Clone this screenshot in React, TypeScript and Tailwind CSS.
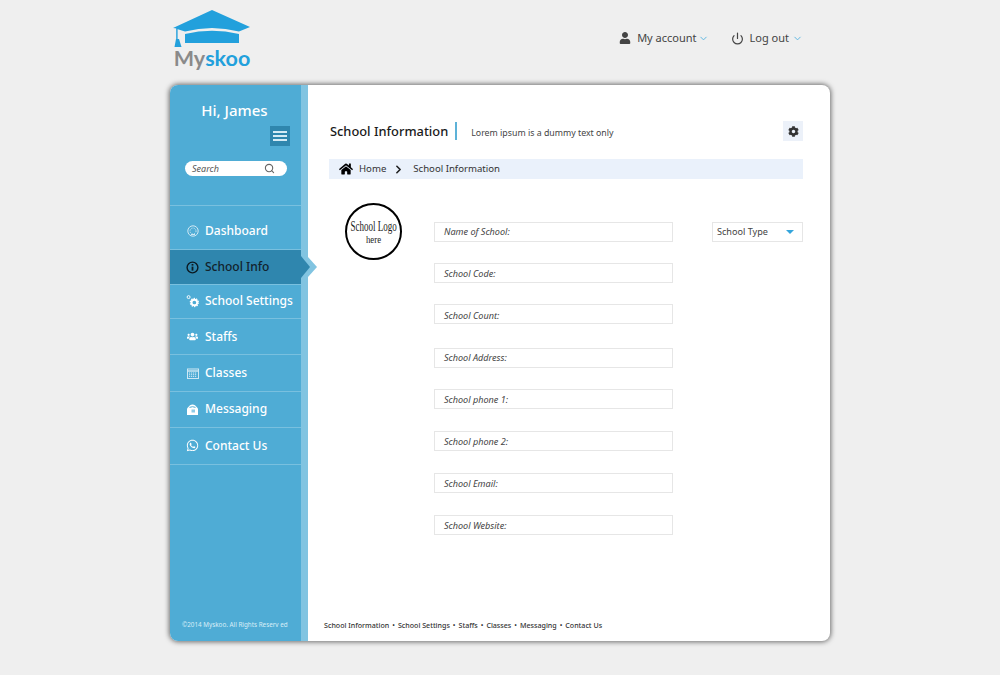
import React from 'react';
import { ChevronDown, ChevronRight, Power, Search } from 'lucide-react';
import { FaUser, FaHome, FaCog, FaUsers, FaWhatsapp } from 'react-icons/fa';

const font = "font-['Noto_Sans','Open_Sans',sans-serif]";

const GaugeIcon = () => (
  <svg width="12" height="12" viewBox="0 0 12 12" fill="none" stroke="#cfe8f4">
    <circle cx="6" cy="6" r="5.2" />
    <circle cx="6" cy="6" r="3" strokeDasharray="1.2 1.2" />
    <path d="M4 9.5h4" />
  </svg>
);

const InfoIcon = () => (
  <svg width="13" height="13" viewBox="0 0 13 13" fill="none" stroke="#0c1a22">
    <circle cx="6.5" cy="6.5" r="5.4" strokeWidth="1.4" />
    <path d="M6.5 5.6v4" strokeWidth="1.8" />
    <path d="M6.5 3v1.6" strokeWidth="1.8" />
  </svg>
);

const GearsIcon = () => (
  <svg width="14" height="14" viewBox="0 0 14 14" fill="none" stroke="#ffffff">
    <circle cx="2.8" cy="2.8" r="1.6" strokeWidth="1" />
    <circle cx="9" cy="8.6" r="3" strokeWidth="2" />
    <circle cx="9" cy="8.6" r="4.3" strokeWidth="1.4" strokeDasharray="1.5 1.2" />
  </svg>
);

const CalendarIcon = () => (
  <svg width="12" height="11" viewBox="0 0 12 11" fill="none" stroke="#cfe8f4">
    <rect x="0.5" y="1" width="11" height="9.5" />
    <path d="M0.5 3h11" strokeWidth="1.4" />
    <path d="M2 5h8M2 6.7h8M2 8.4h8" strokeDasharray="1.2 0.8" />
  </svg>
);

const MessageIcon = () => (
  <svg width="11" height="11" viewBox="0 0 11 11">
    <path d="M0 4.5 L3 1.2 Q5.5 -0.3 8 1.2 L11 4.5 V11 H0 Z" fill="#ffffff" />
    <path d="M2.5 3.4 Q5.5 2 8.5 3.4" fill="none" stroke="#4facd5" />
    <rect x="4.5" y="5.5" width="3.5" height="3" fill="#8ecbe6" />
  </svg>
);

const navItems = [
  { label: 'Dashboard', icon: <GaugeIcon />, cls: 'h-[44px] pt-[7px]' },
  { label: 'School Info', icon: <InfoIcon />, cls: 'h-[35px]', active: true },
  { label: 'School Settings', icon: <GearsIcon />, cls: 'h-[34px] pb-[1px]' },
  { label: 'Staffs', icon: <FaUsers size={11} />, cls: 'h-[36px]' },
  { label: 'Classes', icon: <CalendarIcon />, cls: 'h-[37px]' },
  { label: 'Messaging', icon: <MessageIcon />, cls: 'h-[36px] pb-[1px]' },
  { label: 'Contact Us', icon: <FaWhatsapp size={13} />, cls: 'h-[37px] pb-[1px]' },
];

const fields = [
  { label: 'Name of School:', cls: 'mt-0' },
  { label: 'School Code:', cls: 'mt-[21px] pt-[2px]' },
  { label: 'School Count:', cls: 'mt-[21px] pt-[3px]' },
  { label: 'School Address:', cls: 'mt-[24px]' },
  { label: 'School phone 1:', cls: 'mt-[21px] pt-[2px]' },
  { label: 'School phone 2:', cls: 'mt-[22px] pt-[2px]' },
  { label: 'School Email:', cls: 'mt-[22px] pt-[2px]' },
  { label: 'School Website:', cls: 'mt-[22px] pt-[2px]' },
];

const footerLinks = ['School Information', 'School Settings', 'Staffs', 'Classes', 'Messaging', 'Contact Us'];

function Logo() {
  return (
    <div className="flex w-[78px] flex-col items-center">
      <svg width="78" height="38" viewBox="0 0 78 38">
        <path d="M39 0 L77 17 L66 21.5 Q39 14.5 12 21.5 L4 19 L4 18.5 L0 18 Z" fill="#22a0dc" />
        <path d="M12 24 Q39 17.5 66 24 V33 H12 Z" fill="#22a0dc" />
        <rect x="3.2" y="18" width="1.4" height="12" fill="#22a0dc" />
        <path d="M3 29 H6 L8.5 37 H1.5 Z" fill="#22a0dc" />
      </svg>
      <div className="flex h-[22px] items-center font-['Lato',sans-serif] text-[21.5px] leading-none font-bold">
        <span className="text-[#8a8a8a]">My</span>
        <span className="text-[#22a0dc]">skoo</span>
      </div>
    </div>
  );
}

export default function App() {
  return (
    <div className={`${font} flex h-[675px] w-[1000px] flex-col items-center overflow-hidden bg-[#efefef]`}>
      {/* top bar */}
      <header className="flex h-[85px] w-[660px] pt-[10px] pr-[27px] pl-[3px]">
        <Logo />
        <div className="ml-auto flex h-[56px] items-center text-[11px] text-[#444444]">
          <FaUser size={12} className="text-[#444444]" />
          <span className="ml-[6px]">My account</span>
          <ChevronDown size={11} strokeWidth={2} className="ml-[1px] text-[#55b4e0]" />
          <Power size={13} strokeWidth={2.2} className="ml-[22px] text-[#444444]" />
          <span className="ml-[6px]">Log out</span>
          <ChevronDown size={11} strokeWidth={2} className="ml-[3px] text-[#55b4e0]" />
        </div>
      </header>

      {/* card */}
      <div className="flex h-[556px] w-[660px] rounded-[8px] bg-white shadow-[0_0_5px_1px_rgba(0,0,0,0.55)]">
        <aside className="flex w-[131px] shrink-0 flex-col rounded-l-[8px] bg-[#4facd5] text-white">
          <div className="pt-[14px] pr-[2px] text-center text-[15px] leading-[22px] font-medium">Hi, James</div>
          <div className="mt-[5px] flex justify-end pr-[11px]">
            <div className="flex h-[20px] w-[20px] flex-col items-center justify-center gap-[2px] bg-[#2f86ae]">
              <span className="h-[2px] w-[14px] bg-[#d5ebf5]" />
              <span className="h-[2px] w-[14px] bg-[#d5ebf5]" />
              <span className="h-[2px] w-[14px] bg-[#d5ebf5]" />
            </div>
          </div>
          <div className="mx-[15px] mt-[15px] flex h-[15px] w-[102px] items-center justify-between rounded-full bg-white pr-[12px] pl-[7px]">
            <span className="text-[9px] text-[#555555] italic">Search</span>
            <Search size={11} strokeWidth={2.4} className="text-[#666666]" />
          </div>
          <nav className="mt-[29px] border-t border-[#79c0df]">
            {navItems.map((item) => (
              <div
                key={item.label}
                className={`relative flex items-center gap-[6px] border-b border-[#79c0df] pl-[16px] text-[12px] font-medium ${item.cls} ${
                  item.active ? 'bg-[#2f86ae] text-[#12222c]' : 'text-white'
                }`}
              >
                <span className="flex w-[13px] justify-center">{item.icon}</span>
                <span className="whitespace-nowrap">{item.label}</span>
                {item.active && (
                  <>
                    <span className="absolute top-[7px] left-[138px] h-0 w-0 border-y-[10px] border-l-[9px] border-y-transparent border-l-[#81c4e1]" />
                    <span className="absolute top-[6px] left-[131px] h-0 w-0 border-y-[11px] border-l-[9px] border-y-transparent border-l-[#2f86ae]" />
                  </>
                )}
              </div>
            ))}
          </nav>
          <div className="mt-auto pb-[11px] pl-[12px] text-[6.3px] leading-[10px] whitespace-nowrap text-[#d8eef8]">
            ©2014 Myskoo. All Rights Reserv ed
          </div>
        </aside>
        <div className="w-[7px] shrink-0 bg-[#81c4e1]" />

        <main className="flex min-w-0 flex-1 flex-col pt-[36px] pr-[27px] pl-[21px]">
          <div className="flex h-[20px] items-center">
            <h1 className="pl-px text-[12.85px] leading-[20px] font-medium text-[#1a1a1a]">School Information</h1>
            <span className="ml-[7px] h-[18px] w-[2px] bg-[#5db2d8]" />
            <span className="ml-[14px] pt-[5px] text-[8.8px] text-[#444444]">Lorem ipsum is a dummy text only</span>
            <span className="ml-auto flex h-[20px] w-[20px] items-center justify-center bg-[#ecf1f9]">
              <FaCog size={11} className="text-[#333333]" />
            </span>
          </div>
          <div className="mt-[18px] flex h-[20px] items-center bg-[#eaf1fb] pl-[10px] text-[9.6px] text-[#333333]">
            <FaHome size={14} className="text-black" />
            <span className="ml-[6px]">Home</span>
            <ChevronRight size={13} strokeWidth={3} className="ml-[6px] text-[#222222]" />
            <span className="ml-[8px]">School Information</span>
          </div>

          <div className="mt-[24px] flex">
            <div className="ml-[16px] flex h-[57px] w-[57px] shrink-0 flex-col items-center justify-center rounded-full border-[2px] border-black bg-white font-['Liberation_Serif',serif] text-[#222222]">
              <span className="scale-x-[0.6] text-[15px] leading-[14px] whitespace-nowrap">School Logo</span>
              <span className="scale-x-[0.8] text-[11px] leading-[12px]">here</span>
            </div>
            <div className="mt-[19px] ml-[32px] w-[239px] shrink-0">
              {fields.map((field) => (
                <div
                  key={field.label}
                  className={`flex h-[20px] items-center border border-[#e6e6e6] bg-white pl-[9px] text-[9.1px] text-[#444444] italic ${field.cls}`}
                >
                  {field.label}
                </div>
              ))}
            </div>
            <div className="mt-[19px] ml-[39px] flex h-[20px] w-[91px] shrink-0 items-center justify-between border border-[#e6e6e6] bg-white pr-[8px] pl-[4px] text-[9.1px] text-[#444444]">
              <span>School Type</span>
              <span className="h-0 w-0 border-x-[4px] border-t-[4px] border-x-transparent border-t-[#35a5dc]" />
            </div>
          </div>

          <footer className="mt-auto -ml-[5px] flex pb-[11px] text-[7.1px] leading-[10px] font-medium whitespace-nowrap text-[#333333]">
            {footerLinks.map((link, i) => (
              <span key={link}>
                {link}
                {i < footerLinks.length - 1 && <span className="mx-[3px]">•</span>}
              </span>
            ))}
          </footer>
        </main>
      </div>
    </div>
  );
}
